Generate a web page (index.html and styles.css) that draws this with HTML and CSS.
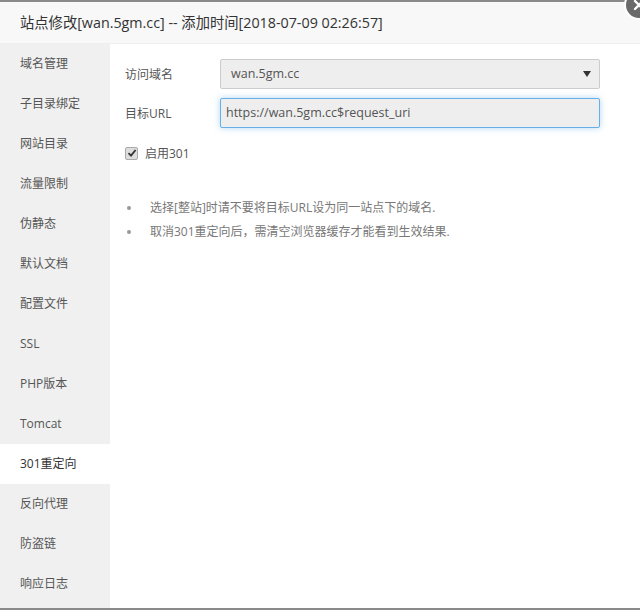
FILE: index.html
```html
<!DOCTYPE html>
<html>
<head>
<meta charset="utf-8">
<link rel="stylesheet" href="styles.css">
</head>
<body>
<div class="modal">
  <div class="title">站点修改[wan.5gm.cc] -- 添加时间[2018-07-09 02:26:57]</div>
  <span class="close"><svg width="14" height="14" viewBox="0 0 14 14"><path d="M3 3 L11 11 M11 3 L3 11" stroke="#fff" stroke-width="2.4" stroke-linecap="round"/></svg></span>
  <div class="body">
    <ul class="side">
      <li>域名管理</li>
      <li>子目录绑定</li>
      <li>网站目录</li>
      <li>流量限制</li>
      <li>伪静态</li>
      <li>默认文档</li>
      <li>配置文件</li>
      <li>SSL</li>
      <li>PHP版本</li>
      <li>Tomcat</li>
      <li class="active">301重定向</li>
      <li>反向代理</li>
      <li>防盗链</li>
      <li>响应日志</li>
    </ul>
    <div class="content">
      <div class="row">
        <span class="label">访问域名</span>
        <div class="select"><span>wan.5gm.cc</span><span class="caret"></span></div>
      </div>
      <div class="row">
        <span class="label">目标URL</span>
        <div class="input focus">https://wan.5gm.cc$request_uri</div>
      </div>
      <label class="check"><span class="box"><svg width="10" height="10" viewBox="0 0 10 10"><path d="M1.5 5.2 L4 7.6 L8.6 2" stroke="#333" stroke-width="1.8" fill="none"/></svg></span>启用301</label>
      <ul class="tips">
        <li>选择[整站]时请不要将目标URL设为同一站点下的域名.</li>
        <li>取消301重定向后，需清空浏览器缓存才能看到生效结果.</li>
      </ul>
    </div>
  </div>
</div>
</body>
</html>
```
FILE: styles.css
```css
html, body {
  margin: 0;
  padding: 0;
  background: #fff;
  overflow: hidden;
}
body {
  font-family: "Open Sans", "Noto Sans CJK SC", sans-serif;
  color: #555;
}
.modal {
  position: relative;
  width: 640px;
  height: 610px;
  border-top: 2px solid #8a8a8a;
  box-sizing: border-box;
  border-bottom: 2px solid #8a8a8a;
  display: flex;
  flex-direction: column;
}
.title {
  height: 41px;
  line-height: 41px;
  padding-left: 20px;
  background: #f8f8f8;
  border-bottom: 1px solid #eee;
  font-size: 14.3px;
  color: #333;
  flex: none;
}
.close {
  position: absolute;
  left: 624px;
  top: -12px;
  width: 26px;
  height: 26px;
  border-radius: 50%;
  background: #6b6b6b;
  border: 2px solid #fff;
  display: flex;
  align-items: center;
  justify-content: center;
}
.body {
  flex: 1;
  display: flex;
}
.side {
  list-style: none;
  margin: 0;
  padding: 0;
  width: 110px;
  background: #f0f0f0;
  flex: none;
}
.side li {
  height: 40px;
  line-height: 40px;
  padding-left: 20px;
  font-size: 12px;
  color: #555;
}
.side li.active {
  background: #fff;
  color: #333;
}
.content {
  flex: 1;
  padding: 15px 40px 0 15px;
  font-size: 12px;
}
.row {
  display: flex;
  align-items: center;
  margin-bottom: 9px;
}
.label {
  width: 95px;
  color: #555;
}
.select, .input {
  width: 380px;
  height: 30px;
  box-sizing: border-box;
  border: 1px solid #ccc;
  border-radius: 2px;
  background: #eee;
  padding-left: 10px;
  line-height: 28px;
  color: #555;
  font-size: 12.5px;
}
.select {
  display: flex;
  justify-content: space-between;
  align-items: center;
  padding-right: 8px;
}
.caret {
  width: 0;
  height: 0;
  border-left: 4px solid transparent;
  border-right: 4px solid transparent;
  border-top: 6px solid #333;
}
.input {
  padding-left: 5px;
}
.focus {
  border-color: #66afe9;
  box-shadow: 0 0 6px rgba(102, 175, 233, 0.5);
}
.check {
  display: flex;
  align-items: center;
  margin-top: 16px;
  color: #555;
}
.box {
  width: 11px;
  height: 11px;
  border: 1px solid #aaa;
  border-radius: 2px;
  background: #ddd;
  margin-right: 7px;
  display: flex;
  align-items: center;
  justify-content: center;
}
.tips {
  margin: 34px 0 0 0;
  padding: 0 0 0 25px;
  color: #777;
}
.tips li {
  line-height: 24px;
  list-style: none;
  position: relative;
}
.tips li::before {
  content: "";
  position: absolute;
  left: -23px;
  top: 10px;
  width: 4px;
  height: 4px;
  border-radius: 50%;
  background: #999;
}
```
